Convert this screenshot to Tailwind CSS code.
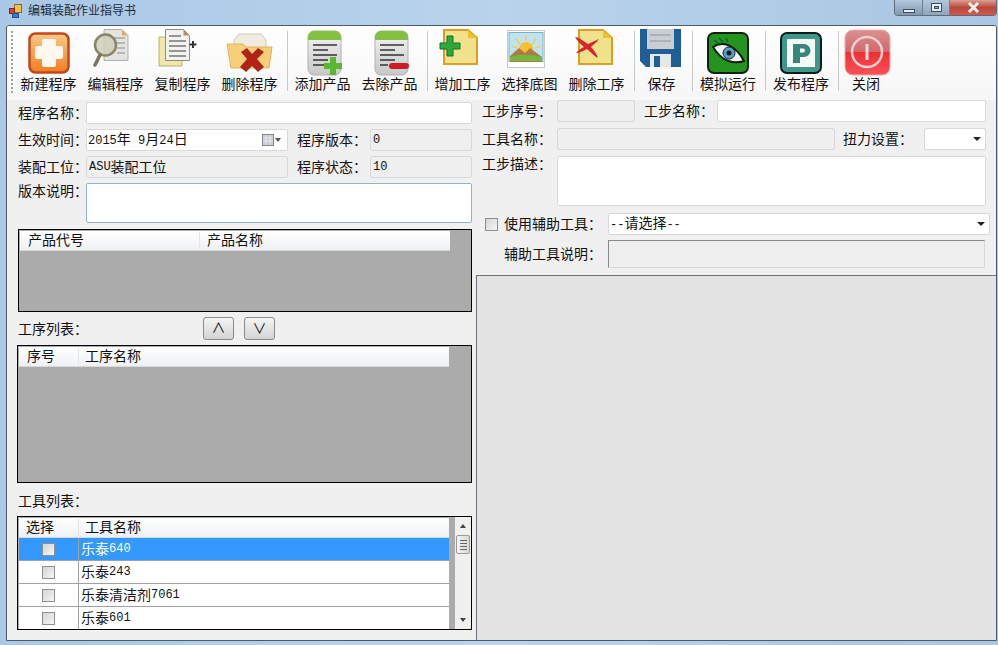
<!DOCTYPE html>
<html lang="zh-CN">
<head>
  <meta charset="UTF-8" />
  <title>编辑装配作业指导书</title>
  <script src="https://cdn.jsdelivr.net/npm/@tailwindcss/browser@4"></script>
</head>
<body class="w-[998px] h-[645px] overflow-hidden bg-gradient-to-r from-[#a9c8e6] via-[#b9d3ec] to-[#a9c6e2] font-['Liberation_Sans','Noto_Sans_CJK_SC',sans-serif] text-[14px] leading-none text-[#111]">

  <!-- title bar -->
  <div class="h-[25px] flex items-start pl-[9px] relative">
    <svg class="mt-[4px]" width="13" height="14" viewBox="0 0 13 14"><rect x="5.500" y=".5" width="7" height="8" fill="#f4c048" stroke="#8a6a20"/><rect x=".5" y="4.500" width="5" height="5" fill="#d8402c" stroke="#7a2a20"/><rect x="3.500" y="9.500" width="6" height="4" fill="#3b79c9" stroke="#27508a"/></svg>
    <span class="ml-[6px] mt-[4px] text-[12px] leading-[14px] text-[#1c2a3a]">编辑装配作业指导书</span>
    <div class="absolute right-[1px] top-0 flex h-[16px] w-[103px] rounded-b-[4px] border border-t-0 border-[#5d6b7c] overflow-hidden">
      <div class="w-[28px] flex items-end justify-center pb-[2px] border-r border-[#6f7f90] bg-gradient-to-b from-[#b4c8dc] to-[#7f97b1]"><div class="w-[12px] h-[4px] bg-[#e8eef4] border border-[#3c4d60]"></div></div>
      <div class="w-[27px] flex items-center justify-center border-r border-[#6f7f90] bg-gradient-to-b from-[#b4c8dc] to-[#8fa5bc]"><div class="w-[11px] h-[9px] border border-[#3c4d60] bg-[#e8eef4] flex items-center justify-center"><div class="w-[5px] h-[3px] bg-[#8fa5bc] border border-[#3c4d60]"></div></div></div>
      <div class="flex-1 flex items-center justify-center bg-gradient-to-b from-[#dc9e92] via-[#b8473a] to-[#d0594c]"><svg width="13" height="11" viewBox="0 0 13 11"><path d="M2 1l9 9M11 1l-9 9" stroke="#f6eeec" stroke-width="3"/></svg></div>
    </div>
  </div>

  <!-- client area -->
  <div class="ml-[6px] w-[991px] h-[616px] border border-[#4d5a68] rounded-t-[3px] bg-[#f0f0f0] overflow-hidden">

    <!-- toolbar -->
    <div class="h-[74px] pl-[3px] flex items-stretch bg-gradient-to-b from-white to-[#f6f6f6]">
      <div class="w-[3px] ml-[1px] -mr-[1px] mt-[5px] h-[62px] border-l-2 border-dotted border-[#a0a0a0]"></div>
      <div class="w-[2px]"></div>

      <div class="w-[67px] flex flex-col items-center pb-[7px]">
        <svg class="self-start ml-[13px] mt-[6px]" width="42" height="42" viewBox="0 0 42 42"><defs><linearGradient id="o1" x1="0" y1="0" x2="0" y2="1"><stop offset="0" stop-color="#fbc98a"/><stop offset="1" stop-color="#f07d1f"/></linearGradient></defs><rect x="1.500" y="1.500" width="39" height="39" rx="6" fill="url(#o1)" stroke="#c2481c" stroke-width="2.500"/><path d="M16 7h10a2 2 0 0 1 2 2v5h5a2 2 0 0 1 2 2v9a2 2 0 0 1-2 2h-5v6a2 2 0 0 1-2 2H16a2 2 0 0 1-2-2v-6H9a2 2 0 0 1-2-2v-9a2 2 0 0 1 2-2h5V9a2 2 0 0 1 2-2z" fill="#fff8ee"/></svg>
        <span class="mt-auto leading-[17px] whitespace-nowrap">新建程序</span>
      </div>
      <div class="w-[67px] flex flex-col items-center pb-[7px]">
        <svg class="self-start ml-[11px] mt-[3px]" width="36" height="38" viewBox="0 0 36 38"><path d="M11 .5h18l6 6v25H11z" fill="#e4e4de" stroke="#b0b0a8"/><path d="M29 .5l6 6h-6z" fill="#d8a878"/><path d="M20 9h12M22 14h10M24 19h8M24 24h8" stroke="#8a8a84" stroke-width="1.200"/><circle cx="12.500" cy="16" r="10.500" fill="#cfcfbe" fill-opacity=".85" stroke="#8b8668" stroke-width="2.500"/><path d="M7 26L2 36" stroke="#7d7556" stroke-width="3.500" stroke-linecap="round"/></svg>
        <span class="mt-auto leading-[17px] whitespace-nowrap">编辑程序</span>
      </div>
      <div class="w-[67px] flex flex-col items-center pb-[7px]">
        <svg class="self-start ml-[9px] mt-[3px]" width="40" height="38" viewBox="0 0 40 38"><path d="M1 8h18l5 5v24H1z" fill="#f0e8a8" stroke="#b8b070"/><path d="M7.500 .5h18l6 6v25h-24z" fill="#f2f2ee" stroke="#8c8c88"/><path d="M25.500 .5l6 6h-6z" fill="#b89068"/><path d="M11 7h12M11 12h17M11 17h17M11 22h17M11 27h17" stroke="#77777a" stroke-width="1.300"/><path d="M35 12v7M31.500 15.500h7" stroke="#333" stroke-width="2"/></svg>
        <span class="mt-auto leading-[17px] whitespace-nowrap">复制程序</span>
      </div>
      <div class="w-[67px] flex flex-col items-center pb-[7px]">
        <svg class="self-start ml-[10px] mt-[7px]" width="47" height="40" viewBox="0 0 47 40"><path d="M8 7l5-6h22l5 6v10H8z" fill="#f0ece0" stroke="#d0c8b0"/><path d="M1 11h16l3 3h26l-3 21H5z" fill="#f6cf78" stroke="#e0b060"/><path d="M15 19l6-4 5 6 6-6 6 4-7 7 7 8-6 5-6-6-6 6-6-5 7-8z" fill="#b02418"/></svg>
        <span class="mt-auto leading-[17px] whitespace-nowrap">删除程序</span>
      </div>

      <div class="w-px h-[60px] mt-[5px] ml-[4px] mr-[1px] bg-[#c8c8c8]"></div>
      <div class="w-px"></div>

      <div class="w-[67px] flex flex-col items-center pb-[7px]">
        <svg class="self-start ml-[17px] mt-[4px]" width="36" height="46" viewBox="0 0 36 46"><defs><linearGradient id="g1" x1="0" y1="0" x2="0" y2="1"><stop offset="0" stop-color="#f4f4f4"/><stop offset="1" stop-color="#c8c8c8"/></linearGradient></defs><rect x="1" y="1" width="33" height="44" rx="6" fill="url(#g1)" stroke="#b0b0b0"/><path d="M1 10V7a6 6 0 0 1 6-6h21a6 6 0 0 1 6 6v3z" fill="#86c040"/><path d="M6 15h24M6 20h15M6 25h24M6 30h15M6 35h15" stroke="#333" stroke-width="1.400"/><path d="M23 27h6v6h6v6h-6v6h-6v-6h-6v-6h6z" fill="#58b830"/></svg>
        <span class="mt-auto leading-[17px] whitespace-nowrap -translate-x-px">添加产品</span>
      </div>
      <div class="w-[67px] flex flex-col items-center pb-[7px]">
        <svg class="self-start ml-[17px] mt-[4px]" width="36" height="46" viewBox="0 0 36 46"><rect x="1" y="1" width="33" height="44" rx="6" fill="url(#g1)" stroke="#b0b0b0"/><path d="M1 10V7a6 6 0 0 1 6-6h21a6 6 0 0 1 6 6v3z" fill="#86c040"/><path d="M6 15h24M6 20h15M6 25h24M6 30h15M6 35h8" stroke="#333" stroke-width="1.400"/><rect x="15" y="33" width="20" height="6" rx="3" fill="#c81e24"/></svg>
        <span class="mt-auto leading-[17px] whitespace-nowrap -translate-x-px">去除产品</span>
      </div>

      <div class="w-px h-[60px] mt-[5px] ml-[3px] mr-[2px] bg-[#c8c8c8]"></div>

      <div class="w-[67px] flex flex-col items-center pb-[7px]">
        <svg class="self-start ml-[9px] mt-[3px]" width="39" height="36" viewBox="0 0 39 36"><path d="M5 1h24l9 8v26H5z" fill="#f0e28a" stroke="#d8a020" stroke-width="2"/><path d="M29 1l9 8h-9z" fill="#f0c030"/><path d="M8 7h6v7h7v6h-7v7H8v-7H1v-6h7z" fill="#2ea83c" stroke="#12702a"/></svg>
        <span class="mt-auto leading-[17px] whitespace-nowrap -translate-x-px">增加工序</span>
      </div>
      <div class="w-[67px] flex flex-col items-center pb-[7px]">
        <svg class="self-start ml-[10px] mt-[4px]" width="38" height="38" viewBox="0 0 38 38"><rect x=".5" y=".5" width="37" height="37" fill="#fff" stroke="#c8c8c8"/><rect x="2" y="2.500" width="34" height="29" fill="#bfe4f0" stroke="#7ab0c8"/><circle cx="19" cy="19" r="7" fill="#f8c030"/><path d="M19 5v6M9 9l4 5M29 9l-4 5M4 16l6 2M34 16l-6 2" stroke="#f8c840" stroke-width="1.300"/><path d="M3 26l9-8 6 5 5-5 12 9v5H3z" fill="#b07a48"/><path d="M3 27c8-3 22-3 32 0v4H3z" fill="#74b83c"/></svg>
        <span class="mt-auto leading-[17px] whitespace-nowrap -translate-x-px">选择底图</span>
      </div>
      <div class="w-[67px] flex flex-col items-center pb-[7px]">
        <svg class="self-start ml-[10px] mt-[3px]" width="39" height="36" viewBox="0 0 39 36"><path d="M5 1h24l9 8v26H5z" fill="#f0e28a" stroke="#d8a020" stroke-width="2"/><path d="M29 1l9 8h-9z" fill="#f0c030"/><path d="M1 8c4 0 8 4 13 7l11-5c-2 3-6 6-8 8 3 3 6 7 7 11-4-2-7-6-11-9-4 2-8 4-11 4 2-2 5-5 8-6C6 15 3 11 1 8z" fill="#d82430"/></svg>
        <span class="mt-auto leading-[17px] whitespace-nowrap -translate-x-px">删除工序</span>
      </div>

      <div class="w-px h-[60px] mt-[5px] ml-[3px] bg-[#c8c8c8]"></div>

      <div class="w-[55px] flex flex-col items-center pb-[7px]">
        <svg class="self-start ml-[5px] mt-[3px]" width="41" height="38" viewBox="0 0 41 38"><path d="M0 0h41v38H6l-6-6z" fill="#1f5f96"/><rect x="7" y="0" width="27" height="20" fill="#c8ced2"/><path d="M10 6h21M10 12h21" stroke="#8d979d"/><rect x="10" y="25" width="21" height="13" fill="#e6e8e8"/><rect x="14" y="27" width="6" height="11" fill="#1f5f96"/></svg>
        <span class="mt-auto leading-[17px] whitespace-nowrap -translate-x-px">保存</span>
      </div>

      <div class="w-px h-[60px] mt-[5px] ml-[2px] bg-[#c8c8c8]"></div>

      <div class="w-[72px] flex flex-col items-center pb-[7px]">
        <svg class="self-start ml-[14px] mt-[6px]" width="42" height="42" viewBox="0 0 42 42"><rect x="1" y="1" width="40" height="40" rx="6" fill="#24941f" stroke="#0e2210" stroke-width="2"/><path d="M6 15c9-6 22-3 31 14-10 3-22 1-31-14z" fill="#eef4f6" stroke="#0c1c0c" stroke-width="2"/><circle cx="22" cy="21" r="6" fill="#5b9ec4" stroke="#123" /><circle cx="22" cy="21" r="2.500" fill="#0c1c2c"/><path d="M7 8l5 4M12 6l4 4M19 6l2 4" stroke="#062" stroke-width="1.500"/></svg>
        <span class="mt-auto leading-[17px] whitespace-nowrap -translate-x-px">模拟运行</span>
      </div>

      <div class="w-px h-[60px] mt-[5px] bg-[#c8c8c8]"></div>

      <div class="w-[72px] flex flex-col items-center pb-[7px]">
        <svg class="self-start ml-[14px] mt-[6px]" width="42" height="42" viewBox="0 0 42 42"><rect x="1" y="1" width="40" height="40" rx="6" fill="#3f978a" stroke="#0c1c1c" stroke-width="2"/><rect x="7" y="7" width="28" height="28" fill="#f4f8f6"/><path d="M13 12h11a6.500 6.500 0 0 1 0 13h-4v6h-7zM20 16.500v4h3a2 2 0 0 0 0-4z" fill="#38877c" fill-rule="evenodd"/></svg>
        <span class="mt-auto leading-[17px] whitespace-nowrap -translate-x-px">发布程序</span>
      </div>

      <div class="w-px h-[60px] mt-[5px] bg-[#c8c8c8]"></div>

      <div class="w-[54px] flex flex-col items-center pb-[7px]">
        <svg class="self-start ml-[5px] mt-[3px]" width="47" height="47" viewBox="0 0 47 47"><defs><linearGradient id="r1" x1="0" y1="0" x2="0" y2="1"><stop offset="0" stop-color="#dc8f90"/><stop offset=".48" stop-color="#d06a6c"/><stop offset=".5" stop-color="#ee2f32"/><stop offset="1" stop-color="#fb5258"/></linearGradient></defs><rect x="1" y="1" width="45" height="45" rx="8" fill="url(#r1)" stroke="#f6a8a8"/><circle cx="23" cy="23" r="15" fill="none" stroke="#f0d0d0" stroke-width="2.500"/><path d="M23 15v16" stroke="#f6dcdc" stroke-width="3"/></svg>
        <span class="mt-auto leading-[17px] whitespace-nowrap">关闭</span>
      </div>
    </div>

    <!-- body -->
    <div class="flex">
      <!-- left column -->
      <div class="w-[469px] shrink-0 pl-[11px] pr-[2px]">
        <div class="flex items-center h-[22px] mt-[2px]">
          <span class="w-[68px] leading-[17px] whitespace-nowrap">程序名称：</span>
          <div class="w-[386px] h-[22px] border border-[#d8d8d8] bg-white rounded-[2px]"></div>
        </div>
        <div class="flex items-center h-[22px] mt-[5px]">
          <span class="w-[68px] leading-[17px] whitespace-nowrap">生效时间：</span>
          <div class="w-[202px] h-[22px] pl-[1px] pr-[6px] border border-[#d8d8d8] bg-white rounded-[2px] flex items-center justify-between">
            <span class="leading-[17px] whitespace-pre"><span class="font-['Liberation_Mono'] text-[12px]">2015</span>年<span class="font-['Liberation_Mono'] text-[12px]"> 9</span>月<span class="font-['Liberation_Mono'] text-[12px]">24</span>日</span>
            <span class="flex items-center"><svg width="12" height="12" viewBox="0 0 12 12"><rect x=".5" y=".5" width="11" height="11" fill="#c8ccd2" stroke="#7f8690"/><path d="M1 4h10M1 7h10M4 1v10M8 1v10" stroke="#f0f0f0" stroke-width=".8"/></svg><span class="ml-[1px] border-x-[3px] border-t-[4px] border-x-transparent border-t-[#555]"></span></span>
          </div>
          <span class="ml-[9px] w-[73px] leading-[17px] whitespace-nowrap">程序版本：</span>
          <div class="w-[102px] h-[22px] px-[2px] border border-[#d8d8d8] bg-[#efefef] rounded-[2px] flex items-center font-['Liberation_Mono'] text-[12px]">0</div>
        </div>
        <div class="flex items-center h-[22px] mt-[5px]">
          <span class="w-[68px] leading-[17px] whitespace-nowrap">装配工位：</span>
          <div class="w-[202px] h-[22px] px-[2px] border border-[#d8d8d8] bg-[#efefef] rounded-[2px] flex items-center leading-[17px]"><span class="font-['Liberation_Mono'] text-[12px]">ASU</span>装配工位</div>
          <span class="ml-[9px] w-[73px] leading-[17px] whitespace-nowrap">程序状态：</span>
          <div class="w-[102px] h-[22px] px-[2px] border border-[#d8d8d8] bg-[#efefef] rounded-[2px] flex items-center font-['Liberation_Mono'] text-[12px]">10</div>
        </div>
        <div class="flex items-start h-[40px] mt-[5px]">
          <span class="w-[68px] leading-[17px] whitespace-nowrap">版本说明：</span>
          <div class="w-[386px] h-[40px] border border-[#8fb3cf] bg-white rounded-[2px]"></div>
        </div>

        <!-- product grid -->
        <div class="w-[454px] h-[83px] mt-[6px] border border-black bg-[#ababab] pt-[1px] pl-[1px]">
          <div class="w-[430px] h-[20px] flex items-center bg-gradient-to-b from-white to-[#eef1f4] border-b border-[#d8d8d8] leading-[17px]">
            <div class="w-[180px] pl-[8px] border-r border-[#e4e4e4]">产品代号</div>
            <div class="pl-[7px]">产品名称</div>
          </div>
        </div>

        <div class="flex items-start h-[33px]">
          <span class="w-[185px] leading-[17px] mt-[9px] whitespace-nowrap">工序列表：</span>
          <div class="flex gap-[10px] mt-[5px]">
            <div class="w-[31px] h-[23px] border border-[#8a8a8a] rounded-[3px] bg-gradient-to-b from-[#f4f4f4] to-[#d4d4d4] flex items-center justify-center leading-[17px]">∧</div>
            <div class="w-[31px] h-[23px] border border-[#8a8a8a] rounded-[3px] bg-gradient-to-b from-[#f4f4f4] to-[#d4d4d4] flex items-center justify-center leading-[17px]">∨</div>
          </div>
        </div>

        <!-- step grid -->
        <div class="w-[455px] h-[138px] -ml-[1px] border border-black bg-[#ababab] pt-[1px] pl-[1px]">
          <div class="w-[430px] h-[20px] flex items-center bg-gradient-to-b from-white to-[#eef1f4] border-b border-[#d8d8d8] leading-[17px]">
            <div class="w-[60px] pl-[8px] border-r border-[#e4e4e4]">序号</div>
            <div class="pl-[6px]">工序名称</div>
          </div>
        </div>

        <div class="h-[33px] flex items-end pb-[6px] leading-[17px]">工具列表：</div>

        <!-- tool grid -->
        <div class="w-[455px] h-[114px] -ml-[1px] border border-black bg-[#ababab] pt-[1px] pl-[1px] flex">
          <div class="w-[430px] h-[111px] overflow-hidden">
            <div class="h-[20px] flex items-center bg-gradient-to-b from-white to-[#eef1f4] border-b border-[#d8d8d8] leading-[17px]">
              <div class="w-[60px] pl-[7px] border-r border-[#e4e4e4]">选择</div>
              <div class="pl-[6px]">工具名称</div>
            </div>
            <div class="h-[23px] flex bg-[#3399ff] text-white border-b border-[#a0a0a0]">
              <div class="w-[60px] flex items-center justify-center border-r border-[#a0a0a0]"><div class="w-[13px] h-[13px] border border-[#8e8f8f] bg-gradient-to-br from-[#d4d4d4] to-[#f6f6f6]"></div></div>
              <div class="pl-[2px] pt-[1px] flex items-center leading-[17px]">乐泰<span class="font-['Liberation_Mono'] text-[12px]">640</span></div>
            </div>
            <div class="h-[23px] flex bg-white border-b border-[#a0a0a0]">
              <div class="w-[60px] flex items-center justify-center border-r border-[#a0a0a0]"><div class="w-[13px] h-[13px] border border-[#8e8f8f] bg-gradient-to-br from-[#d4d4d4] to-[#f6f6f6]"></div></div>
              <div class="pl-[2px] pt-[1px] flex items-center leading-[17px]">乐泰<span class="font-['Liberation_Mono'] text-[12px]">243</span></div>
            </div>
            <div class="h-[23px] flex bg-white border-b border-[#a0a0a0]">
              <div class="w-[60px] flex items-center justify-center border-r border-[#a0a0a0]"><div class="w-[13px] h-[13px] border border-[#8e8f8f] bg-gradient-to-br from-[#d4d4d4] to-[#f6f6f6]"></div></div>
              <div class="pl-[2px] pt-[1px] flex items-center leading-[17px]">乐泰清洁剂<span class="font-['Liberation_Mono'] text-[12px]">7061</span></div>
            </div>
            <div class="h-[23px] flex bg-white border-b border-[#a0a0a0]">
              <div class="w-[60px] flex items-center justify-center border-r border-[#a0a0a0]"><div class="w-[13px] h-[13px] border border-[#8e8f8f] bg-gradient-to-br from-[#d4d4d4] to-[#f6f6f6]"></div></div>
              <div class="pl-[2px] pt-[1px] flex items-center leading-[17px]">乐泰<span class="font-['Liberation_Mono'] text-[12px]">601</span></div>
            </div>
          </div>
          <div class="w-[6px]"></div>
          <div class="w-[16px] h-[112px] -mt-[1px] bg-[#f0f0f0] flex flex-col items-center relative">
            <span class="mt-[7px] border-x-[3px] border-b-[4px] border-x-transparent border-b-[#444]"></span>
            <div class="absolute top-[18px] left-[1px] w-[14px] h-[19px] border border-[#9a9a9a] rounded-[2px] bg-gradient-to-r from-[#f4f4f4] to-[#d8d8d8] flex flex-col items-center justify-center gap-[2px]"><i class="w-[7px] h-px bg-[#666]"></i><i class="w-[7px] h-px bg-[#666]"></i><i class="w-[7px] h-px bg-[#666]"></i><i class="w-[7px] h-px bg-[#666]"></i></div>
            <span class="mt-auto mb-[7px] border-x-[3px] border-t-[4px] border-x-transparent border-t-[#444]"></span>
          </div>
        </div>
      </div>

      <!-- right column -->
      <div class="flex-1 min-w-0">
        <div class="flex items-center h-[22px] pl-[6px]">
          <span class="w-[75px] leading-[17px] whitespace-nowrap">工步序号：</span>
          <div class="w-[78px] h-[22px] border border-[#d8d8d8] bg-[#efefef] rounded-[2px]"></div>
          <span class="ml-[9px] w-[73px] leading-[17px] whitespace-nowrap">工步名称：</span>
          <div class="w-[269px] h-[22px] border border-[#d8d8d8] bg-white rounded-[2px]"></div>
        </div>
        <div class="flex items-center h-[22px] mt-[6px] pl-[6px]">
          <span class="w-[75px] leading-[17px] whitespace-nowrap">工具名称：</span>
          <div class="w-[278px] h-[22px] border border-[#d8d8d8] bg-[#efefef] rounded-[2px]"></div>
          <span class="ml-[8px] w-[81px] leading-[17px] whitespace-nowrap">扭力设置：</span>
          <div class="w-[62px] h-[22px] pr-[4px] border border-[#d8d8d8] bg-white rounded-[2px] flex items-center justify-end"><span class="border-x-[4px] border-t-[4px] border-x-transparent border-t-[#222]"></span></div>
        </div>
        <div class="flex items-start h-[50px] mt-[6px] pl-[6px]">
          <span class="w-[75px] leading-[17px] whitespace-nowrap">工步描述：</span>
          <div class="w-[429px] h-[50px] border border-[#d8d8d8] bg-white rounded-[2px]"></div>
        </div>
        <div class="flex items-center h-[22px] mt-[7px] pl-[9px]">
          <div class="w-[13px] h-[13px] border border-[#8e8f8f] bg-gradient-to-br from-[#d4d4d4] to-[#f6f6f6]"></div>
          <span class="ml-[6px] w-[104px] leading-[17px] whitespace-nowrap">使用辅助工具：</span>
          <div class="w-[382px] h-[22px] pl-[1px] pr-[4px] border border-[#d8d8d8] bg-white rounded-[2px] flex items-center justify-between leading-[17px]"><span><span class="font-['Liberation_Mono'] text-[12px]">--</span>请选择<span class="font-['Liberation_Mono'] text-[12px]">--</span></span><span class="border-x-[4px] border-t-[4px] border-x-transparent border-t-[#222]"></span></div>
        </div>
        <div class="flex items-center h-[28px] mt-[5px] pl-[28px]">
          <span class="w-[104px] leading-[17px] whitespace-nowrap">辅助工具说明：</span>
          <div class="w-[377px] h-[28px] border border-[#d8d8d8] border-t-[#8a8a8a] border-l-[#8a8a8a] bg-[#efefef]"></div>
        </div>
        <div class="h-[400px] mt-[7px] border-t border-l border-[#6a7078] bg-[#e3e3e3]"></div>
      </div>
    </div>
  </div>
</body>
</html>
